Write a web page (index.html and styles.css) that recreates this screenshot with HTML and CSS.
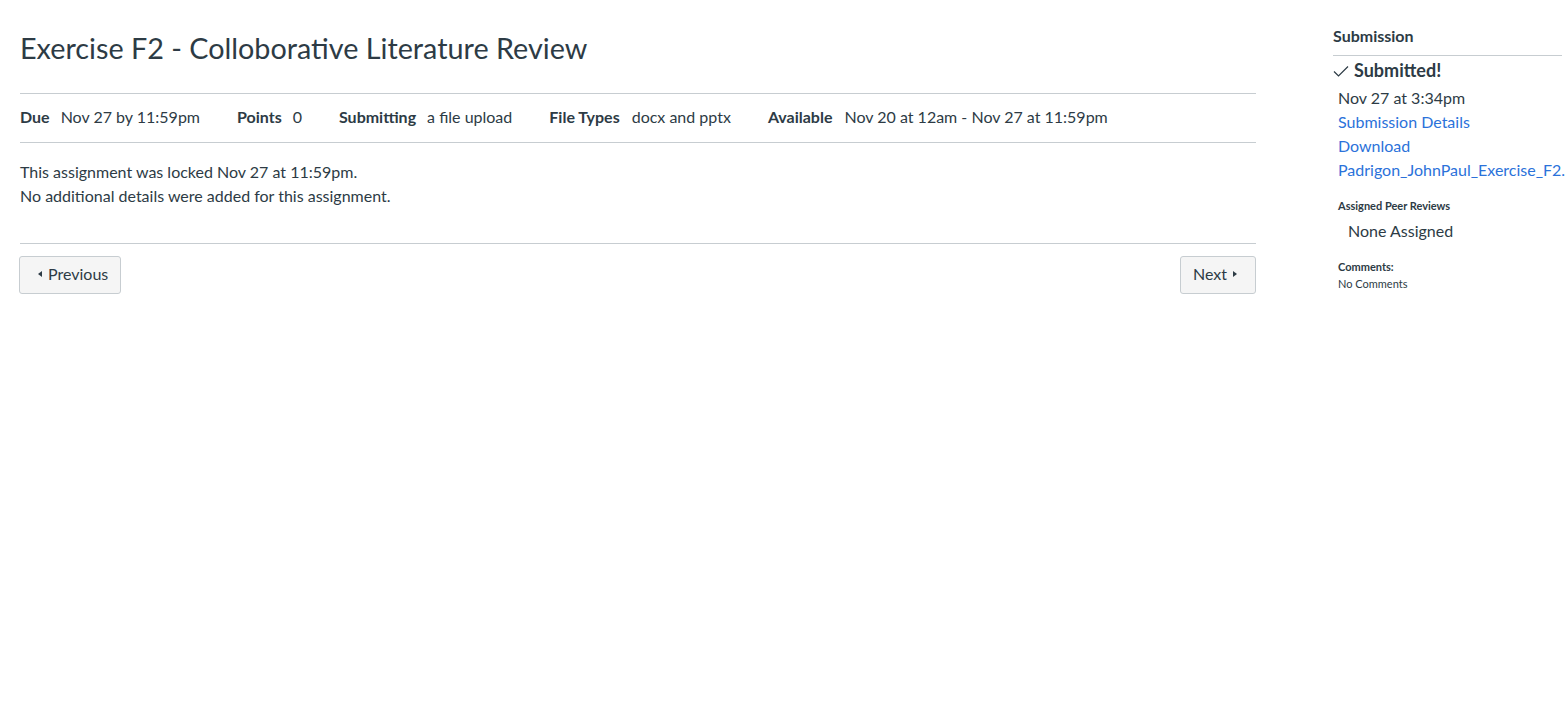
FILE: index.html
```html
<!DOCTYPE html>
<html>
<head>
<meta charset="utf-8">
<link rel="stylesheet" href="styles.css">
</head>
<body>
<div class="page">
  <main class="main">
    <h1 class="title">Exercise F2 - Colloborative Literature Review</h1>
    <ul class="meta">
      <li><span class="label">Due</span><span class="value">Nov 27 by 11:59pm</span></li>
      <li><span class="label">Points</span><span class="value">0</span></li>
      <li><span class="label">Submitting</span><span class="value">a file upload</span></li>
      <li><span class="label">File Types</span><span class="value">docx and pptx</span></li>
      <li><span class="label">Available</span><span class="value">Nov 20 at 12am - Nov 27 at 11:59pm</span></li>
    </ul>
    <div class="desc">
      <p>This assignment was locked Nov 27 at 11:59pm.</p>
      <p>No additional details were added for this assignment.</p>
    </div>
    <div class="nav">
      <a class="btn btn-prev"><span class="caret-left"></span>Previous</a>
      <a class="btn btn-next">Next<span class="caret-right"></span></a>
    </div>
  </main>
  <aside class="side">
    <h2 class="side-head">Submission</h2>
    <div class="submitted">
      <svg class="check" width="16" height="12" viewBox="0 0 16 12"><path d="M1 6.5 L5.5 11 L15 1.5" fill="none" stroke="#2D3B45" stroke-width="1.2"/></svg>
      <span>Submitted!</span>
    </div>
    <div class="details">
      <div>Nov 27 at 3:34pm</div>
      <a class="link">Submission Details</a>
      <a class="link">Download</a>
      <a class="link">Padrigon_JohnPaul_Exercise_F2.docx</a>
    </div>
    <div class="small-head">Assigned Peer Reviews</div>
    <div class="none">None Assigned</div>
    <div class="small-head comments-head">Comments:</div>
    <div class="small-text">No Comments</div>
  </aside>
</div>
</body>
</html>
```

FILE: styles.css
```css
html, body {
  margin: 0;
  padding: 0;
  background: #fff;
}
body {
  font-family: Lato, "Helvetica Neue", Arial, sans-serif;
  color: #2D3B45;
  font-size: 16px;
  line-height: 1.5;
  overflow: hidden;
}
.page {
  display: flex;
  align-items: flex-start;
}
.main {
  width: 1236px;
  margin-left: 20px;
  flex: none;
}
.title {
  font-size: 28.75px;
  font-weight: 400;
  margin: 0;
  padding-top: 30px;
  line-height: 36px;
  height: 63px;
}
.meta {
  list-style: none;
  margin: 0;
  padding: 0 0 2px 0;
  border-top: 1px solid #C7CDD1;
  border-bottom: 1px solid #C7CDD1;
  height: 46px;
  display: flex;
  align-items: center;
}
.meta li {
  display: flex;
  margin-right: 37px;
}
.label {
  font-weight: 700;
  margin-right: 11px;
}
.meta li:nth-child(4) .label,
.meta li:nth-child(5) .label {
  margin-right: 12px;
}
.desc {
  padding-top: 17px;
  padding-bottom: 35px;
  border-bottom: 1px solid #C7CDD1;
}
.desc p {
  margin: 0;
}
.nav {
  display: flex;
  justify-content: space-between;
  margin-top: 12px;
}
.btn {
  display: inline-flex;
  align-items: center;
  height: 34px;
  padding-top: 0;
  padding-bottom: 2px;
  background: #F5F5F5;
  border: 1px solid #C7CDD1;
  border-radius: 3px;
  color: #2D3B45;
  font-size: 16px;
}
.btn-prev {
  padding-left: 18px;
  padding-right: 12px;
  margin-left: -1px;
}
.btn-next {
  padding-left: 12px;
  padding-right: 18px;
}
.caret-left {
  width: 0;
  height: 0;
  border-top: 3.5px solid transparent;
  border-bottom: 3.5px solid transparent;
  border-right: 4px solid #2D3B45;
  margin-right: 6px;
}
.caret-right {
  width: 0;
  height: 0;
  border-top: 3.5px solid transparent;
  border-bottom: 3.5px solid transparent;
  border-left: 4px solid #2D3B45;
  margin-left: 6px;
}
.side {
  margin-left: 77px;
  width: 229px;
  flex: none;
  white-space: nowrap;
}
.side-head {
  font-size: 16px;
  font-weight: 700;
  margin: 0;
  padding-top: 26px;
  line-height: 20px;
  padding-bottom: 9px;
  border-bottom: 1px solid #C7CDD1;
}
.submitted {
  display: flex;
  align-items: center;
  font-size: 18px;
  font-weight: 700;
  line-height: 28px;
}
.check {
  margin-right: 5px;
  margin-top: 2px;
}
.details {
  padding-left: 5px;
  line-height: 24px;
  margin-top: 2px;
}
.details > * {
  display: block;
}
.link {
  color: #2B72DA;
  text-decoration: none;
}
.small-head {
  font-size: 11px;
  font-weight: 700;
  padding-left: 5px;
  margin-top: 16px;
  line-height: 16px;
}
.none {
  padding-left: 15px;
  line-height: 24px;
  margin-top: 5px;
}
.comments-head {
  margin-top: 16px;
}
.small-text {
  font-size: 11px;
  padding-left: 5px;
  line-height: 16px;
  margin-top: 1px;
}
```
